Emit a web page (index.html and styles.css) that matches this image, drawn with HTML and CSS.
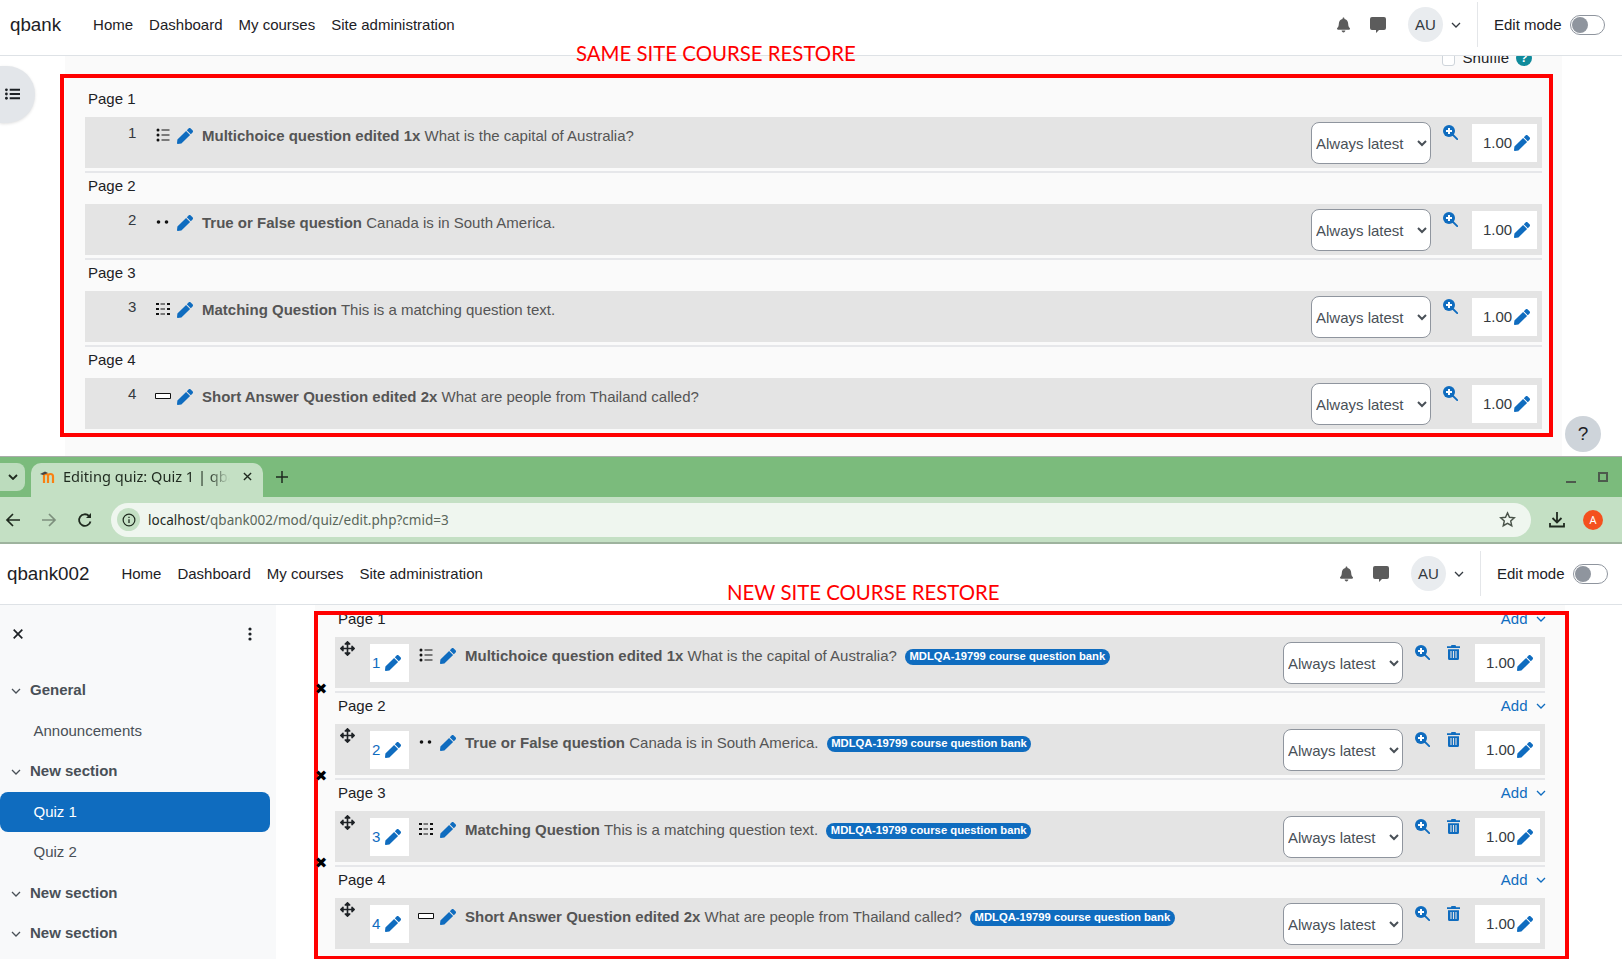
FILE: index.html
```html
<!DOCTYPE html>
<html lang="en">
<head>
<meta charset="utf-8">
<title>Same site and new site course restore</title>
<link rel="stylesheet" href="styles.css">
</head>
<body>
<svg class="sprite" aria-hidden="true">
  <symbol id="i-pencil" viewBox="0 0 512 512"><path d="M290.74 93.24l128.02 128.02-277.99 277.99-114.14 12.6C11.35 513.54-1.56 500.62.14 485.34l12.7-114.22 277.9-277.88zm207.2-19.06l-60.11-60.11c-18.75-18.75-49.16-18.75-67.91 0l-56.55 56.55 128.02 128.02 56.55-56.55c18.75-18.76 18.75-49.16 0-67.91z"/></symbol>
  <symbol id="i-zoom" viewBox="0 0 15 15"><circle cx="6" cy="6" r="6"/><path d="M3 6h6M6 3v6" stroke="#fff" stroke-width="2"/><path d="M9.5 9.5L14.2 14.2" stroke="currentColor" stroke-width="1.8" stroke-linecap="round"/></symbol>
  <symbol id="i-trash" viewBox="0 0 13 15"><path d="M4.5 0h4l.6 1.2H13v1.9H0V1.200h3.900zM1 4.200h11V13.500A1.500 1.500 0 0 1 10.500 15h-8A1.500 1.500 0 0 1 1 13.500z"/><path d="M4 6v7M6.500 6v7M9 6v7" stroke="#e4e4e4" stroke-width="1.100"/></symbol>
  <symbol id="i-move" viewBox="0 0 512 512"><path d="M352.201 425.775l-79.196 79.196c-9.373 9.373-24.568 9.373-33.941 0l-79.196-79.196c-15.119-15.119-4.411-40.971 16.971-40.97h51.162L228 284H127.196v51.162c0 21.382-25.851 32.09-40.971 16.971L7.029 272.937c-9.373-9.373-9.373-24.569 0-33.941L86.225 159.8c15.119-15.119 40.971-4.411 40.971 16.971V228H228V127.196h-51.23c-21.382 0-32.09-25.851-16.971-40.971l79.196-79.196c9.373-9.373 24.568-9.373 33.941 0l79.196 79.196c15.119 15.119 4.411 40.971-16.971 40.971h-51.162V228h100.804v-51.162c0-21.382 25.851-32.09 40.97-16.971l79.196 79.196c9.373 9.373 9.373 24.569 0 33.941L425.773 352.2c-15.119 15.119-40.971 4.411-40.97-16.971V284H284v100.804h51.23c21.382 0 32.09 25.851 16.971 40.971z"/></symbol>
  <symbol id="i-bell" viewBox="0 0 448 512"><path d="M224 512c35.32 0 63.97-28.65 63.97-64H160.03c0 35.35 28.65 64 63.97 64zm215.39-149.71c-19.32-20.76-55.47-51.99-55.47-154.29 0-77.7-54.48-139.9-127.94-155.16V32c0-17.67-14.32-32-31.98-32s-31.98 14.33-31.98 32v20.84C118.56 68.1 64.08 130.3 64.08 208c0 102.3-36.15 133.53-55.47 154.29-6 6.45-8.66 14.16-8.61 21.71.11 16.4 12.98 32 32.1 32h383.8c19.12 0 32-15.6 32.1-32 .05-7.55-2.61-15.27-8.61-21.71z"/></symbol>
  <symbol id="i-msg" viewBox="0 0 16 16"><path d="M2 0h12a2 2 0 0 1 2 2v9a2 2 0 0 1-2 2H9l-3 3v-3H2a2 2 0 0 1-2-2V2a2 2 0 0 1 2-2z"/></symbol>
  <symbol id="i-chev" viewBox="0 0 10 6"><path d="M1 1l4 4 4-4" fill="none" stroke="currentColor" stroke-width="1.300"/></symbol>
  <symbol id="i-mc" viewBox="0 0 16 14"><circle cx="3" cy="2" r="1.500"/><circle cx="3" cy="7" r="1.500"/><circle cx="3" cy="12" r="1.500"/><path d="M6.500 1.500h8v1h-8zM6.500 6.500h8v1h-8zM6.500 11.500h8v1h-8z"/></symbol>
  <symbol id="i-tf" viewBox="0 0 16 14"><circle cx="3.500" cy="7" r="1.800"/><circle cx="11.500" cy="7" r="1.800"/></symbol>
  <symbol id="i-match" viewBox="0 0 16 14"><path d="M1 1h3v2H1zM1 6h3v2H1zM1 11h3v2H1zM5.500 1.500h4.500v1H5.500zM5.500 6.500h4.500v1H5.500zM5.500 11.500h4.500v1H5.500zM12 1h3v2h-3zM12 6h3v2h-3zM12 11h3v2h-3z"/></symbol>
  <symbol id="i-sa" viewBox="0 0 16 14"><path d="M.5 4.500h15v5H.5z" fill="#fff" stroke="#111" stroke-width="1"/></symbol>
</svg>

<div class="stage">
  <section class="window window-top">
    <header class="site-head site-head-top">
      <span class="brand">qbank</span>
      <nav class="site-nav"><span>Home</span><span>Dashboard</span><span>My courses</span><span>Site administration</span></nav>
      <div class="head-tools">
        <svg class="i-bell"><use href="#i-bell"/></svg>
        <svg class="i-msg"><use href="#i-msg"/></svg>
        <span class="avatar">AU</span>
        <svg class="i-usermenu"><use href="#i-chev"/></svg>
        <span class="head-divider"></span>
        <span class="edit-label">Edit mode</span>
        <span class="switch"><span class="knob"></span></span>
      </div>
    </header>
    <div class="body-top">
      <div class="rail"><button class="drawer-toggle" aria-label="Open index">
        <svg class="i-list" viewBox="0 0 16 12"><circle cx="1.500" cy="1.500" r="1.500"/><circle cx="1.500" cy="6" r="1.500"/><circle cx="1.500" cy="10.500" r="1.500"/><path d="M5 .5h11v2H5zM5 5h11v2H5zM5 9.500h11v2H5z"/></svg>
      </button></div>
      <main class="quiz quiz-top">
        <div class="shuffle"><input class="check" type="checkbox" aria-label="Shuffle"><span>Shuffle</span><span class="help-dot">?</span></div>

        <div class="page-label">Page 1</div>
        <div class="slot">
          <span class="num">1</span>
          <svg class="qtype"><use href="#i-mc"/></svg>
          <svg class="i-pen"><use href="#i-pencil"/></svg>
          <p class="qtext"><b>Multichoice question edited 1x</b> What is the capital of Australia?</p>
          <select class="version"><option>Always latest</option></select>
          <svg class="i-zoom"><use href="#i-zoom"/></svg>
          <span class="mark">1.00<svg class="i-pen-mark"><use href="#i-pencil"/></svg></span>
        </div>
        <div class="sep"></div>

        <div class="page-label">Page 2</div>
        <div class="slot">
          <span class="num">2</span>
          <svg class="qtype"><use href="#i-tf"/></svg>
          <svg class="i-pen"><use href="#i-pencil"/></svg>
          <p class="qtext"><b>True or False question</b> Canada is in South America.</p>
          <select class="version"><option>Always latest</option></select>
          <svg class="i-zoom"><use href="#i-zoom"/></svg>
          <span class="mark">1.00<svg class="i-pen-mark"><use href="#i-pencil"/></svg></span>
        </div>
        <div class="sep"></div>

        <div class="page-label">Page 3</div>
        <div class="slot">
          <span class="num">3</span>
          <svg class="qtype"><use href="#i-match"/></svg>
          <svg class="i-pen"><use href="#i-pencil"/></svg>
          <p class="qtext"><b>Matching Question</b> This is a matching question text.</p>
          <select class="version"><option>Always latest</option></select>
          <svg class="i-zoom"><use href="#i-zoom"/></svg>
          <span class="mark">1.00<svg class="i-pen-mark"><use href="#i-pencil"/></svg></span>
        </div>
        <div class="sep"></div>

        <div class="page-label">Page 4</div>
        <div class="slot">
          <span class="num">4</span>
          <svg class="qtype"><use href="#i-sa"/></svg>
          <svg class="i-pen"><use href="#i-pencil"/></svg>
          <p class="qtext"><b>Short Answer Question edited 2x</b> What are people from Thailand called?</p>
          <select class="version"><option>Always latest</option></select>
          <svg class="i-zoom"><use href="#i-zoom"/></svg>
          <span class="mark">1.00<svg class="i-pen-mark"><use href="#i-pencil"/></svg></span>
        </div>
      </main>
    </div>
    <button class="help-fab">?</button>
  </section>

  <section class="window window-bottom">
    <div class="tabstrip">
      <span class="tab-switch"><svg class="i-tabchev" viewBox="0 0 10 6"><path d="M1 1l4 4 4-4" fill="none" stroke="#1f2a1f" stroke-width="1.800"/></svg></span>
      <div class="tab">
        <svg class="favicon" viewBox="0 0 16 14"><path d="M4 5.500C4 4 5 4 6 4c1.500 0 2 1 2 2v7M8 6c0-1.500 1-2 2.500-2S13 5 13 6.500V13M4 5.500V13" fill="none" stroke="#f98012" stroke-width="2.200"/><path d="M0 4l5-2.500L8 3 3 5z" fill="#444"/></svg>
        <span class="tab-title">Editing quiz: Quiz 1 | qba</span>
        <svg class="tab-close" viewBox="0 0 10 10"><path d="M1 1l8 8M9 1l-8 8" stroke="#1f2a1f" stroke-width="1.500"/></svg>
      </div>
      <svg class="tab-new" viewBox="0 0 12 12"><path d="M6 0v12M0 6h12" stroke="#1f2a1f" stroke-width="1.500"/></svg>
      <div class="win-controls"><span class="win-min"></span><span class="win-max"></span></div>
    </div>
    <div class="toolbar">
      <svg class="tool-icon" viewBox="0 0 16 16"><path d="M15 8H2M8 2L2 8l6 6" fill="none" stroke="#1f2a1f" stroke-width="1.700"/></svg>
      <svg class="tool-icon tool-off" viewBox="0 0 16 16"><path d="M1 8h13M8 2l6 6-6 6" fill="none" stroke="#7d8f7d" stroke-width="1.700"/></svg>
      <svg class="tool-icon" viewBox="0 0 16 16"><path d="M13.500 9.500A5.800 5.800 0 1 1 12 4" fill="none" stroke="#1f2a1f" stroke-width="1.800"/><path d="M14 1v5H9z" fill="#1f2a1f"/></svg>
      <div class="omnibox">
        <span class="site-info"><svg class="i-info" viewBox="0 0 16 16"><circle cx="8" cy="8" r="6.700" fill="none" stroke="#1f2a1f" stroke-width="1.400"/><path d="M8 7v4.500M8 4.200v1.500" stroke="#1f2a1f" stroke-width="1.500"/></svg></span>
        <span class="url"><span class="url-host">localhost</span>/qbank002/mod/quiz/edit.php?cmid=3</span>
        <svg class="i-star" viewBox="0 0 18 18"><path d="M9 2l2.100 4.700 5.100.5-3.800 3.400 1.100 5L9 13l-4.500 2.600 1.100-5-3.800-3.400 5.100-.5z" fill="none" stroke="#4a544a" stroke-width="1.500"/></svg>
      </div>
      <svg class="i-download" viewBox="0 0 16 16"><path d="M8 0v10M3.500 6L8 10.500 12.500 6M1 11v3.500h14V11" fill="none" stroke="#1f2a1f" stroke-width="1.800"/></svg>
      <span class="profile">A</span>
    </div>
    <header class="site-head site-head-bottom">
      <span class="brand">qbank002</span>
      <nav class="site-nav"><span>Home</span><span>Dashboard</span><span>My courses</span><span>Site administration</span></nav>
      <div class="head-tools">
        <svg class="i-bell"><use href="#i-bell"/></svg>
        <svg class="i-msg"><use href="#i-msg"/></svg>
        <span class="avatar">AU</span>
        <svg class="i-usermenu"><use href="#i-chev"/></svg>
        <span class="head-divider"></span>
        <span class="edit-label">Edit mode</span>
        <span class="switch"><span class="knob"></span></span>
      </div>
    </header>
    <div class="body-bottom">
      <aside class="course-index">
        <div class="index-top">
          <svg class="i-close" viewBox="0 0 10 10"><path d="M.7.7l8.600 8.600M9.300.7L.7 9.300" stroke="#1d2125" stroke-width="1.700"/></svg>
          <svg class="i-dots" viewBox="0 0 4 14"><circle cx="2" cy="2" r="1.600"/><circle cx="2" cy="7" r="1.600"/><circle cx="2" cy="12" r="1.600"/></svg>
        </div>
        <div class="index-section"><svg class="i-secchev"><use href="#i-chev"/></svg>General</div>
        <div class="index-item">Announcements</div>
        <div class="index-section"><svg class="i-secchev"><use href="#i-chev"/></svg>New section</div>
        <div class="index-item index-active">Quiz 1</div>
        <div class="index-item">Quiz 2</div>
        <div class="index-section"><svg class="i-secchev"><use href="#i-chev"/></svg>New section</div>
        <div class="index-section"><svg class="i-secchev"><use href="#i-chev"/></svg>New section</div>
      </aside>
      <main class="quiz quiz-bottom">
        <div class="page-label"><span>Page 1</span><span class="add">Add<svg class="i-addchev"><use href="#i-chev"/></svg></span></div>
        <div class="slot slot-edit">
          <svg class="i-move"><use href="#i-move"/></svg>
          <span class="numbox">1<svg class="i-pen-mark"><use href="#i-pencil"/></svg></span>
          <svg class="qtype"><use href="#i-mc"/></svg>
          <svg class="i-pen"><use href="#i-pencil"/></svg>
          <p class="qtext"><b>Multichoice question edited 1x</b> What is the capital of Australia? <span class="badge">MDLQA-19799 course question bank</span></p>
          <select class="version"><option>Always latest</option></select>
          <svg class="i-zoom"><use href="#i-zoom"/></svg>
          <svg class="i-trash"><use href="#i-trash"/></svg>
          <span class="mark">1.00<svg class="i-pen-mark"><use href="#i-pencil"/></svg></span>
        </div>
        <div class="sep"><span class="page-break">✖</span></div>

        <div class="page-label"><span>Page 2</span><span class="add">Add<svg class="i-addchev"><use href="#i-chev"/></svg></span></div>
        <div class="slot slot-edit">
          <svg class="i-move"><use href="#i-move"/></svg>
          <span class="numbox">2<svg class="i-pen-mark"><use href="#i-pencil"/></svg></span>
          <svg class="qtype"><use href="#i-tf"/></svg>
          <svg class="i-pen"><use href="#i-pencil"/></svg>
          <p class="qtext"><b>True or False question</b> Canada is in South America. <span class="badge">MDLQA-19799 course question bank</span></p>
          <select class="version"><option>Always latest</option></select>
          <svg class="i-zoom"><use href="#i-zoom"/></svg>
          <svg class="i-trash"><use href="#i-trash"/></svg>
          <span class="mark">1.00<svg class="i-pen-mark"><use href="#i-pencil"/></svg></span>
        </div>
        <div class="sep"><span class="page-break">✖</span></div>

        <div class="page-label"><span>Page 3</span><span class="add">Add<svg class="i-addchev"><use href="#i-chev"/></svg></span></div>
        <div class="slot slot-edit">
          <svg class="i-move"><use href="#i-move"/></svg>
          <span class="numbox">3<svg class="i-pen-mark"><use href="#i-pencil"/></svg></span>
          <svg class="qtype"><use href="#i-match"/></svg>
          <svg class="i-pen"><use href="#i-pencil"/></svg>
          <p class="qtext"><b>Matching Question</b> This is a matching question text. <span class="badge">MDLQA-19799 course question bank</span></p>
          <select class="version"><option>Always latest</option></select>
          <svg class="i-zoom"><use href="#i-zoom"/></svg>
          <svg class="i-trash"><use href="#i-trash"/></svg>
          <span class="mark">1.00<svg class="i-pen-mark"><use href="#i-pencil"/></svg></span>
        </div>
        <div class="sep"><span class="page-break">✖</span></div>

        <div class="page-label"><span>Page 4</span><span class="add">Add<svg class="i-addchev"><use href="#i-chev"/></svg></span></div>
        <div class="slot slot-edit">
          <svg class="i-move"><use href="#i-move"/></svg>
          <span class="numbox">4<svg class="i-pen-mark"><use href="#i-pencil"/></svg></span>
          <svg class="qtype"><use href="#i-sa"/></svg>
          <svg class="i-pen"><use href="#i-pencil"/></svg>
          <p class="qtext"><b>Short Answer Question edited 2x</b> What are people from Thailand called? <span class="badge">MDLQA-19799 course question bank</span></p>
          <select class="version"><option>Always latest</option></select>
          <svg class="i-zoom"><use href="#i-zoom"/></svg>
          <svg class="i-trash"><use href="#i-trash"/></svg>
          <span class="mark">1.00<svg class="i-pen-mark"><use href="#i-pencil"/></svg></span>
        </div>
      </main>
    </div>
  </section>

  <div class="frame frame-top"></div>
  <div class="frame frame-bottom"></div>
  <div class="note note-top">SAME SITE COURSE RESTORE</div>
  <div class="note note-bottom">NEW SITE COURSE RESTORE</div>
</div>
</body>
</html>
```

FILE: styles.css
```css
* { box-sizing: border-box; }
html, body { margin: 0; padding: 0; background: #fff; }
body { font: 15px/22px "Liberation Sans", Arial, sans-serif; color: #1d2125; }
.sprite { position: absolute; width: 0; height: 0; overflow: hidden; }
svg { display: block; flex: none; fill: currentColor; }
button { font: inherit; border: 0; padding: 0; }
p { margin: 0; }

.stage { position: relative; width: 1622px; height: 959px; overflow: hidden; background: #fff; }
.window { position: relative; }
.window-top { height: 456px; overflow: hidden; }
.window-bottom { height: 503px; overflow: hidden; }

/* site header */
.site-head { display: flex; align-items: center; background: #fff; border-bottom: 1px solid #dee2e6; position: relative; z-index: 1; }
.site-head-top { height: 56px; padding: 0 17px 6px 10px; }
.site-head-bottom { height: 61px; padding: 0 14px 1px 7px; }
.brand { font-size: 18.75px; margin-right: 32px; color: #1d2125; }
.site-nav { display: flex; gap: 16px; }
.head-tools { margin-left: auto; display: flex; align-items: center; }
.i-bell { width: 13px; height: 16px; color: #5c5c5c; }
.i-msg { width: 16px; height: 16px; margin-left: 20px; color: #5c5c5c; }
.avatar { width: 35px; height: 35px; margin-left: 22px; border-radius: 50%; background: #e9ecef; display: flex; align-items: center; justify-content: center; color: #343a40; }
.i-usermenu { width: 10px; height: 6px; margin-left: 8px; color: #343a40; }
.head-divider { width: 1px; height: 45px; margin-left: 16px; background: #e4e6e9; }
.edit-label { margin-left: 16px; width: 67px; white-space: nowrap; }
.switch { width: 35px; height: 20px; margin-left: 9px; border: 1px solid #8f959e; border-radius: 10px; background: #fff; padding: 1px; }
.knob { display: block; width: 16px; height: 16px; border-radius: 50%; background: #8f959e; }

/* top window body */
.body-top { display: flex; height: 400px; background: #fff; }
.rail { width: 65px; flex: none; padding-top: 10px; }
.drawer-toggle { display: flex; align-items: center; width: 35px; height: 57px; padding-left: 5px; background: #e3e6ea; border-radius: 0 28px 28px 0; box-shadow: 0 1px 3px rgba(0,0,0,.12); color: #1d2125; }
.i-list { width: 15px; height: 12px; margin-top: -1px; }
.help-fab { position: absolute; left: 1565px; top: 416px; width: 36px; height: 36px; border-radius: 50%; background: #ced4da; color: #1d2125; font-size: 19px; font-weight: 400; text-align: center; }

/* quiz lists */
.quiz { background: #fafafa; padding: 0 20px; flex: none; }
.quiz-top { width: 1497px; }
.quiz-bottom { width: 1250px; padding-top: 1px; }
.shuffle { height: 30px; display: flex; align-items: flex-end; justify-content: flex-end; padding: 0 10px 20px 0; gap: 8px; line-height: 16px; color: #1d2125; white-space: nowrap; }
.check { appearance: none; width: 13px; height: 13px; margin: 0; background: #fff; border: 1px solid #ced4da; border-radius: 3px; }
.help-dot { width: 16px; height: 16px; border-radius: 50%; background: #0f8a9b; color: #fff; font-size: 12px; font-weight: 700; text-align: center; line-height: 16px; margin-left: -1px; }
.page-label { height: 31px; line-height: 26px; padding-left: 3px; display: flex; justify-content: space-between; color: #1d2125; }
.add { display: flex; align-items: center; color: #0f6cbf; height: 26px; margin-right: -1px; }
.i-addchev { width: 10px; height: 6px; margin-left: 8.500px; color: #0f6cbf; }
.slot { display: flex; align-items: flex-start; height: 51px; background: #e4e4e4; white-space: nowrap; }
.sep { position: relative; height: 2px; margin-top: 3px; background: #e6e7ea; }
.page-break { position: absolute; left: -21px; top: -10px; width: 14px; height: 16px; line-height: 16px; font-size: 15px; text-align: center; color: #000; z-index: 3; font-family: "DejaVu Sans", sans-serif; }
.num { width: 27px; margin: 5px 0 0 43px; color: #343a40; }
.qtype { width: 16px; height: 14px; margin-top: 11px; color: #111; }
.i-pen { width: 16px; height: 16px; margin: 11px 0 0 6px; color: #0f6cbf; }
.qtext { margin: 8px 0 0 9px; color: #555; }
.qtext b { font-weight: 700; }
.version { width: 120px; height: 42px; margin: 5px 0 0 auto; padding: 0; background: #fff; border: 1px solid #8f959e; border-radius: 8px; color: #495057; font: 15px "Liberation Sans", Arial, sans-serif; }
.i-zoom { width: 15px; height: 15px; margin: 8px 0 0 12px; color: #0f6cbf; }
.mark { display: flex; align-items: center; width: 65px; height: 38px; margin: 7px 5px 0 14px; padding-left: 11px; background: #fff; color: #343a40; }
.i-pen-mark { width: 16px; height: 16px; margin-left: 2px; color: #0f6cbf; }

.slot-edit .i-move { width: 15px; height: 15px; margin: 4px 0 0 5px; color: #1d2125; }
.numbox { display: flex; align-items: center; width: 39px; height: 38px; margin: 7px 0 0 15px; padding-left: 2px; background: #fff; color: #0f6cbf; }
.numbox .i-pen-mark { margin-left: 5px; }
.slot-edit .qtype { margin-left: 9px; }
.slot-edit .i-trash { width: 13px; height: 15px; margin: 8px 0 0 17px; color: #0f6cbf; }
.slot-edit .mark { margin-left: 15px; }
.badge { display: inline-block; height: 16px; margin-left: 4px; padding: 0 4.500px; border-radius: 8px; background: #0f6cbf; color: #fff; font-size: 11.25px; font-weight: 700; line-height: 15px; vertical-align: 1px; }

/* browser chrome */
.tabstrip { display: flex; align-items: flex-start; height: 41px; background: #7bbb7c; border-top: 1px solid #a9aca9; }
.tab-switch { display: flex; align-items: center; justify-content: center; width: 25px; height: 28px; margin-top: 6px; background: #bcdcbd; border-radius: 0 8px 8px 0; }
.i-tabchev { width: 10px; height: 6px; }
.tab { display: flex; align-items: center; width: 232px; height: 34px; margin: 6px 0 0 6px; padding: 0 0 7px 9px; background: #c4e0c4; border-radius: 10px 10px 0 0; font: 14.6px "Noto Sans", sans-serif; color: #1f2a1f; }
.favicon { width: 16px; height: 14px; }
.tab-title { width: 172px; margin: 0 0 2px 7px; white-space: nowrap; -webkit-mask-image: linear-gradient(90deg, #000 84%, transparent 97%); mask-image: linear-gradient(90deg, #000 84%, transparent 97%); }
.tab-close { width: 9px; height: 9px; margin-left: 8px; }
.tab-new { width: 12px; height: 12px; margin: 14px 0 0 13px; }
.win-controls { display: flex; align-items: flex-start; margin-left: auto; padding: 15px 14px 0 0; }
.win-min { width: 10px; height: 2px; margin: 9px 22px 0 0; background: #4d5a4d; }
.win-max { width: 10px; height: 10px; border: 2px solid #4d5a4d; }
.toolbar { display: flex; align-items: center; height: 47px; padding: 0 19px 0 5px; background: #c4e0c4; border-bottom: 2px solid #9eb39e; }
.tool-icon { width: 16px; height: 16px; margin-right: 20px; }
.tool-icon:nth-child(3) { margin-right: 18px; }
.omnibox { display: flex; align-items: center; width: 1420px; height: 34px; padding: 0 15px 0 6px; background: #eff6ef; border-radius: 17px; font: 13.5px "Noto Sans", sans-serif; color: #5a665a; }
.site-info { display: flex; align-items: center; justify-content: center; width: 23px; height: 23px; border-radius: 50%; background: #c4e0c4; }
.i-info { width: 14px; height: 14px; }
.url { margin-left: 8px; white-space: nowrap; }
.url-host { color: #1f2a1f; }
.i-star { width: 17px; height: 17px; margin-left: auto; }
.i-download { width: 16px; height: 16px; margin-left: 18px; }
.profile { display: flex; align-items: center; justify-content: center; width: 20px; height: 20px; margin-left: 18px; border-radius: 50%; background: #f4511e; color: #fff; font: 11px "Noto Sans", sans-serif; }

/* bottom body */
.body-bottom { display: flex; height: 354px; background: #fff; }
.course-index { width: 276px; flex: none; margin-right: 39px; background: #f8f9fa; color: #495057; }
.index-top { display: flex; align-items: center; justify-content: space-between; height: 56px; margin-bottom: 9px; padding: 2px 24px 0 13px; }
.i-close { width: 10px; height: 10px; }
.i-dots { width: 4px; height: 14px; color: #1d2125; }
.index-section { display: flex; align-items: center; height: 40.500px; padding-left: 11px; font-weight: 700; }
.i-secchev { width: 10px; height: 6px; margin-right: 9px; margin-top: 2px; color: #495057; }
.index-item { display: flex; align-items: center; height: 40.500px; padding-left: 33.500px; }
.index-active { width: 270px; background: #0f6cbf; color: #fff; border-radius: 8px; }

/* annotations */
.frame { position: absolute; border: 4px solid #f00; pointer-events: none; z-index: 2; }
.frame-top { left: 60px; top: 74px; width: 1493px; height: 363px; }
.frame-bottom { left: 314px; top: 611px; width: 1255px; height: 349px; }
.note { position: absolute; color: #f00; font: 20.4px/24px Lato, sans-serif; white-space: nowrap; z-index: 3; }
.note-top { left: 576px; top: 41px; }
.note-bottom { left: 727px; top: 580px; }
```
